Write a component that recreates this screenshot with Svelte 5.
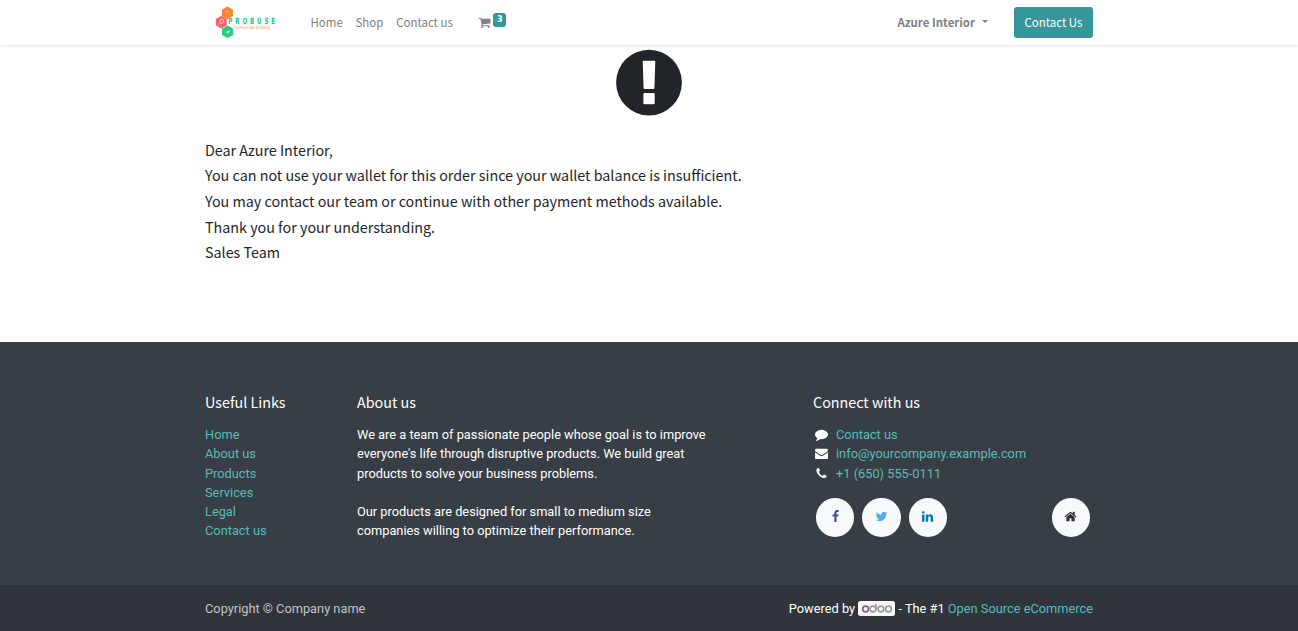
<script>
  const paths = {
    cart: 'M704 1536q0 52-38 90t-90 38-90-38-38-90 38-90 90-38 90 38 38 90zm896 0q0 52-38 90t-90 38-90-38-38-90 38-90 90-38 90 38 38 90zm128-1088v512q0 24-16.5 42.5t-40.5 21.5l-1044 122q13 60 13 70 0 16-24 64h920q26 0 45 19t19 45-19 45-45 19h-1024q-26 0-45-19t-19-45q0-11 8-31.5t16-36 21.5-40 15.5-29.5l-177-823h-204q-26 0-45-19t-19-45 19-45 45-19h256q16 0 28.5 6.5t19.5 15.5 13 24.5 8 26 5.5 29.5 4.5 26h1201q26 0 45 19t19 45z',
    facebook: 'M1343 12v264h-157q-86 0-116 36t-30 108v189h293l-39 296h-254v759h-306v-759h-255v-296h255v-218q0-186 104-288.5t277-102.5q147 0 228 12z',
    twitter: 'M1684 408q-67 98-162 167 1 14 1 42 0 130-38 259.5t-115.5 248.5-184.5 210.5-258 146-323 54.5q-271 0-496-145 35 4 78 4 225 0 401-138-105-2-188-64.5t-114-159.5q33 5 61 5 43 0 85-11-112-23-185.5-111.5t-73.5-205.5v-4q68 38 146 41-66-44-105-115t-39-154q0-88 44-163 121 149 294.5 238.5t371.5 99.5q-8-38-8-74 0-134 94.5-228.5t228.5-94.5q140 0 236 102 109-21 205-78-37 115-142 178 93-10 186-50z',
    linkedin: 'M477 625v991h-330v-991h330zm21-306q1 73-50.5 122t-135.5 49h-2q-82 0-132-49t-50-122q0-74 51.5-122.5t134.5-48.5 133 48.5 51 122.5zm1166 729v568h-329v-530q0-105-40.5-164.5t-126.5-59.5q-63 0-105.5 34.5t-63.5 85.5q-11 30-11 81v553h-329q2-399 2-647t-1-296l-1-48h329v144h-2q20-32 41-56t56.5-52 87-43.5 114.5-15.5q171 0 275 113.5t104 332.5z',
    home: 'M1472 992v480q0 26-19 45t-45 19h-384v-384h-256v384h-384q-26 0-45-19t-19-45v-480q0-1 .5-3t.5-3l575-474 575 474q1 2 1 6zm223-69l-62 74q-8 9-21 11h-3q-13 0-21-7l-692-577-692 577q-12 8-24 7-13-2-21-11l-62-74q-8-10-7-23.5t11-21.5l719-599q32-26 76-26t76 26l244 204v-195q0-14 9-23t23-9h192q14 0 23 9t9 23v408l219 182q10 8 11 21.5t-7 23.5z',
    comment: 'M1792 896q0 174-120 321.5t-326 233-450 85.5q-70 0-145-8-198 175-460 242-49 14-114 22-17 2-30.5-9t-17.5-29v-1q-3-4-.5-12t2-10 4.5-9.5l6-9 7-8.5 8-9q7-8 31-34.5t34.5-38 31-39.5 32.5-51 27-59 26-76q-157-89-247.5-220t-90.5-281q0-130 71-248.5t191-204.5 286-136.5 348-50.5q244 0 450 85.5t326 233 120 321.5z',
    envelope: 'M1792 710v794q0 66-47 113t-113 47h-1472q-66 0-113-47t-47-113v-794q44 49 101 87 362 246 497 345 57 42 92.5 65.5t94.5 48 110 24.5h2q51 0 110-24.5t94.5-48 92.5-65.5q170-123 498-345 57-39 100-87zm0-294q0 79-49 151t-122 123q-376 261-468 325-10 7-42.5 31t-54 38.5-52 32.5-57.5 27-50 9h-2q-23 0-50-9t-57.5-27-52-32.5-54-38.5-42.5-31q-91-64-262-182.5t-205-142.5q-62-42-117-115.5t-55-136.5q0-78 41.5-130t118.5-52h1472q65 0 112.5 47t47.5 113z',
    phone: 'M1600 1240q0 27-10 70.5t-21 68.5q-21 50-122 106-94 51-186 51-27 0-53-3.5t-57.5-12.5-47-14.5-55.5-20.5-49-18q-98-35-175-83-127-79-264-216t-216-264q-48-77-83-175-3-9-18-49t-20.5-55.5-14.5-47-12.5-57.5-3.5-53q0-92 51-186 56-101 106-122 25-11 68.5-21t70.5-10q14 0 21 3 18 6 53 76 11 19 30 54t35 63.5 31 53.5q3 4 17.5 25t21.5 35.5 7 28.5q0 20-28.5 50t-62 55-62 53-28.5 46q0 9 5 22.5t8.5 20.5 14 24 11.5 19q76 137 174 235t235 174q2 1 19 11.5t24 14 20.5 8.5 22.5 5q18 0 46-28.5t53-62 55-62 50-28.5q14 0 28.5 7t35.5 21.5 25 17.5q25 15 53.5 31t63.5 35 54 30q70 35 76 53 3 7 3 21z'
  };
  const links = ['Home', 'About us', 'Products', 'Services', 'Legal', 'Contact us'];
  const contacts = [
    ['comment', 'Contact us'],
    ['envelope', 'info@yourcompany.example.com'],
    ['phone', '+1 (650) 555-0111']
  ];
  const socials = [
    ['facebook', '#3b5998'],
    ['twitter', '#55acee'],
    ['linkedin', '#0077b5'],
    ['home', '#2c3035']
  ];
</script>

{#snippet icon(name, size)}
  <svg class="icon" width={size} height={size} viewBox="0 0 1792 1792" fill="currentColor"><path d={paths[name]} /></svg>
{/snippet}

<div class="page">
  <header>
    <div class="container bar">
      <svg class="logo" width="62" height="34" viewBox="0 0 62 34">
        <path d="M12.500 .5l5.500 3.200v6.300l-5.500 3.200-5.500-3.200V3.700z" fill="#f58634" />
        <path d="M6.300 9.800l5.500 3.200v6.200l-5.500 3.200-5.500-3.200V13z" fill="#f0666a" />
        <path d="M12.500 19.400l5.500 3.200v6.300l-5.500 3.200-5.500-3.200v-6.300z" fill="#27cc87" />
        <path d="M10 5l2 .5 1 2 2 2M12 5.500l1.500-.8" stroke="#f9a863" stroke-width="1" fill="none" />
        <circle cx="6.800" cy="15.200" r="1.900" stroke="#ffc4c6" fill="none" /><path d="M5.400 16.700l-1.700 1.700" stroke="#ffc4c6" />
        <path d="M9.700 26.500l5.600-3-2 5-1-2z" fill="#a6f1d0" />
        <text transform="translate(13.300 17.700) scale(.72 1)" textLength="65" fill="#23c486" class="brand">PROBUSE</text>
        <path d="M18 18.900h43" stroke="#dce5e1" stroke-width=".6" />
        <text x="18.600" y="23.200" textLength="36" lengthAdjust="spacingAndGlyphs" fill="#f9a05f" class="tag">PROFESSIONAL BUSINESS</text>
      </svg>
      <nav><a href="#home">Home</a><a href="#shop">Shop</a><a href="#contact">Contact us</a></nav>
      <a class="cart" href="#cart">{@render icon('cart', 13)}<span class="badge">3</span></a>
      <a class="user" href="#account">Azure Interior<span class="caret"></span></a>
      <a class="cta" href="#contact">Contact Us</a>
    </div>
  </header>

  <main class="container">
    <svg class="alert" width="66" height="66" viewBox="0 0 66 66">
      <circle cx="33" cy="32.600" r="32.900" fill="#212529" />
      <path d="M27.600 10.700h10.800q.9 0 .9.900l-.9 26.500q0 .9-1 .9h-8.800q-1 0-1-.9l-.9-26.500q0-.9.900-.9zM28.600 43h8.900q1.200 0 1.200 1.200v8.800q0 1.200-1.200 1.200h-8.900q-1.200 0-1.200-1.200v-8.800q0-1.200 1.200-1.200z" fill="#fff" />
    </svg>
    <div class="message">
      <p>Dear Azure Interior,</p>
      <p>You can not use your wallet for this order since your wallet balance is insufficient.</p>
      <p>You may contact our team or continue with other payment methods available.</p>
      <p>Thank you for your understanding.</p>
      <p>Sales Team</p>
    </div>
  </main>

  <footer>
    <div class="container columns">
      <section>
        <h5>Useful Links</h5>
        <ul>{#each links as link}<li><a href="#link">{link}</a></li>{/each}</ul>
      </section>
      <section>
        <h5>About us</h5>
        <p>We are a team of passionate people whose goal is to improve<br />everyone's life through disruptive products. We build great<br />products to solve your business problems.</p>
        <p class="second">Our products are designed for small to medium size<br />companies willing to optimize their performance.</p>
      </section>
      <section>
        <h5>Connect with us</h5>
        <ul>
          {#each contacts as [name, label]}
            <li class="contact"><span>{@render icon(name, 13)}</span><a href="#contact">{label}</a></li>
          {/each}
        </ul>
        <div class="socials">
          {#each socials as [name, color]}
            <a href="#social" class={name} style:color={color} aria-label={name}>{@render icon(name, 13)}</a>
          {/each}
        </div>
      </section>
    </div>
    <div class="copyright">
      <div class="container">
        <span class="muted">Copyright © Company name</span>
        <span class="powered">Powered by
          <svg class="odoo" width="37" height="15" viewBox="0 0 37 15">
            <rect width="37" height="15" rx="2.500" fill="#f8f8f8" />
            <g fill="none" stroke="#9a999b" stroke-width="1.600">
              <circle cx="7.600" cy="8" r="2.900" stroke="#875a7b" />
              <circle cx="15" cy="8" r="2.900" /><path d="M17.900 2.800V8" />
              <circle cx="22.900" cy="8" r="2.900" /><circle cx="30.500" cy="8" r="2.900" />
            </g>
          </svg>
          - The #1 <a href="#ecommerce">Open Source eCommerce</a></span>
      </div>
    </div>
  </footer>
</div>

<style>
  :global(body) { margin: 0; }
  .page { height: 631px; display: flex; flex-direction: column; overflow: hidden; background: #fff; color: #212529; font: 12.800px/19.250px Roboto, sans-serif; }
  a { color: #55bdb9; text-decoration: none; }
  p, ul, h5 { margin: 0; padding: 0; }
  ul { list-style: none; }
  .icon { display: block; overflow: visible; }
  .container { width: 888px; margin: 0 auto; }
  header, .message, h5 { font-family: "Noto Sans CJK SC", sans-serif; }
  header { height: 45px; flex: none; box-shadow: 0 1px 3px rgba(0, 0, 0, .12); }
  .bar { height: 45px; display: flex; align-items: center; }
  .bar a { color: #808080; font-size: 11.460px; line-height: 18px; }
  .logo { margin-left: 10px; flex: none; overflow: visible; }
  .brand { font: bold 8.500px "DejaVu Sans Condensed", "DejaVu Sans", sans-serif; }
  .tag { font: 3.500px "Liberation Sans", sans-serif; }
  nav { display: flex; gap: 12.800px; margin-left: 33.500px; padding-bottom: 1px; }
  .cart { display: flex; align-items: center; margin-left: 25.500px; }
  .bar .badge { width: 13px; height: 14px; margin: -5px 0 0 2px; border-radius: 3px; background: #35979c; color: #fff; font: bold 8px/13px "DejaVu Sans", sans-serif; text-align: center; }
  .bar .user { margin-left: auto; font-weight: 700; display: flex; align-items: center; padding-bottom: 1px; }
  .caret { border: 3.800px solid transparent; border-top-color: #808080; border-bottom: 0; margin: -1px 0 0 6.500px; }
  .bar .cta { margin-left: 26.500px; width: 79px; height: 31px; line-height: 30px; border-radius: 3px; background: #35979c; color: #fff; text-align: center; }
  main { height: 297px; flex: none; display: flex; flex-direction: column; }
  .alert { margin: 5px auto 0; overflow: visible; }
  .message { padding-top: 20.800px; font-size: 14.325px; line-height: 25.600px; }
  footer { flex: 1; display: flex; flex-direction: column; background: #383e45; color: #fff; }
  .columns { height: 243px; display: grid; grid-template-columns: 152px 456px 280px; }
  section { padding-top: 48px; }
  h5 { font-size: 14.325px; font-weight: 400; line-height: 24px; margin-bottom: 11px; }
  .second { margin-top: 19.250px; }
  .contact { display: flex; align-items: center; }
  .contact span { width: 23px; box-sizing: border-box; padding-left: 2px; }
  .socials { display: flex; gap: 8px; padding: 15px 3px 0; }
  .socials a { width: 38.400px; height: 39px; border-radius: 50%; background: #f8f9fa; display: flex; align-items: center; justify-content: center; padding-bottom: 2px; box-sizing: border-box; }
  .socials .home { margin-left: auto; }
  .copyright { flex: 1; background: #30343b; }
  .copyright .container { height: 47px; display: flex; align-items: center; justify-content: space-between; }
  .muted { color: #c1c3c5; }
  .odoo { vertical-align: -3px; }
</style>
